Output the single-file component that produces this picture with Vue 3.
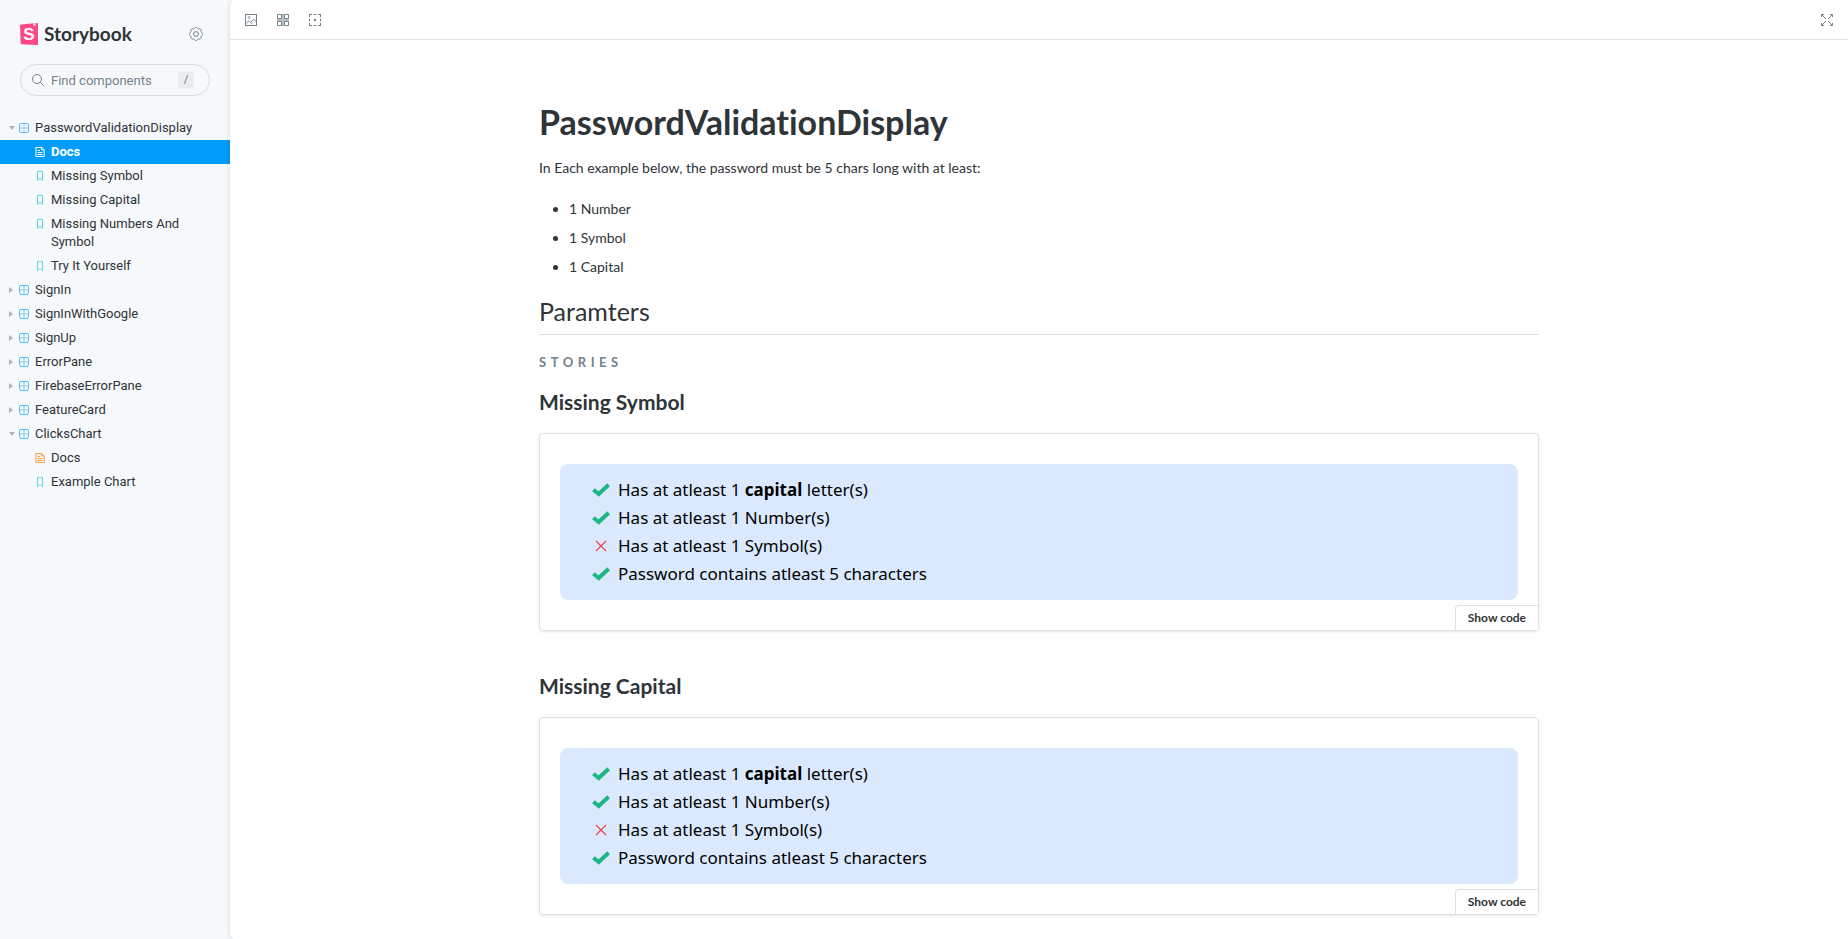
<script setup>
const tree = [
  {
    name: 'PasswordValidationDisplay',
    open: true,
    children: [
      { name: 'Docs', kind: 'docs', selected: true },
      { name: 'Missing Symbol', kind: 'story' },
      { name: 'Missing Capital', kind: 'story' },
      { name: 'Missing Numbers And Symbol', kind: 'story' },
      { name: 'Try It Yourself', kind: 'story' },
    ],
  },
  { name: 'SignIn' },
  { name: 'SignInWithGoogle' },
  { name: 'SignUp' },
  { name: 'ErrorPane' },
  { name: 'FirebaseErrorPane' },
  { name: 'FeatureCard' },
  {
    name: 'ClicksChart',
    open: true,
    children: [
      { name: 'Docs', kind: 'docs' },
      { name: 'Example Chart', kind: 'story' },
    ],
  },
]

const stories = ['Missing Symbol', 'Missing Capital']

const rules = [
  { ok: true, before: 'Has at atleast 1 ', strong: 'capital', after: ' letter(s)' },
  { ok: true, before: 'Has at atleast 1 Number(s)' },
  { ok: false, before: 'Has at atleast 1 Symbol(s)' },
  { ok: true, before: 'Password contains atleast 5 characters' },
]

// Outline of an eight-toothed cog around the centre of a 14-unit box.
const cogPoints = Array.from({ length: 96 }, (_, i) => {
  const angle = (i / 96) * Math.PI * 2
  const radius = 6.05 + 0.55 * Math.tanh(2 * Math.cos(8 * angle))
  return `${(7 + radius * Math.cos(angle)).toFixed(2)},${(7 + radius * Math.sin(angle)).toFixed(2)}`
}).join(' ')
</script>

<template>
  <div class="app">
    <aside class="sidebar">
      <header class="brand-row">
        <a class="brand" href="#">
          <svg class="logo" viewBox="0 0 18 22" aria-hidden="true">
            <path fill="#ff4785" d="M1 1.6 16.8.1a1 1 0 0 1 1.2 1V21a1 1 0 0 1-1.1 1L1.6 21.3a1 1 0 0 1-1-1L0 2.6a1 1 0 0 1 1-1z" />
            <path fill="#fff" d="M13.3.4l2.2-.2.1 2.8-.9-.6-1 .7z" />
            <text x="9" y="17" text-anchor="middle" class="mark">S</text>
          </svg>
          <span>Storybook</span>
        </a>
        <button class="icon-button" type="button" aria-label="Shortcuts">
          <svg width="14" height="14" viewBox="0 0 14 14" fill="none" stroke="currentColor">
            <circle cx="7" cy="7" r="2.4" />
            <polygon :points="cogPoints" />
          </svg>
        </button>
      </header>

      <div class="search">
        <svg width="12" height="12" viewBox="0 0 12 12" fill="none" stroke="currentColor">
          <circle cx="5" cy="5" r="4.5" />
          <path d="M8.3 8.3 11.6 11.6" />
        </svg>
        <input type="text" placeholder="Find components" aria-label="Find components" />
        <kbd>/</kbd>
      </div>

      <nav class="tree">
        <template v-for="node in tree" :key="node.name">
          <button type="button" class="node" :aria-expanded="!!node.open">
            <span class="caret" :class="{ open: node.open }"></span>
            <svg class="component" width="10" height="10" viewBox="0 0 10 10" fill="none">
              <rect x=".5" y=".5" width="9" height="9" rx="1.5" />
              <path d="M5 1v8M1 5h8" />
            </svg>
            <span>{{ node.name }}</span>
          </button>
          <a
            v-for="child in node.children"
            :key="child.name"
            href="#"
            class="leaf"
            :class="[child.kind, { selected: child.selected }]"
          >
            <svg v-if="child.kind === 'docs'" width="10" height="10" viewBox="0 0 10 10" fill="none" stroke="currentColor">
              <path d="M.9.5h6L9.200 2.800v6.700H.9zM6.700.5V3H9" />
              <path d="M2.500 3.500h2.500M2.500 5.500h5M2.500 7.500h5" />
            </svg>
            <svg v-else width="10" height="10" viewBox="0 0 10 10" fill="none" stroke="currentColor">
              <path d="M2.500.5h5v9L5 7.300 2.500 9.500z" />
            </svg>
            <span>{{ child.name }}</span>
          </a>
        </template>
      </nav>
    </aside>

    <main class="main">
      <div class="toolbar">
        <button class="icon-button" type="button" aria-label="Change the background">
          <svg width="12" height="12" viewBox="0 0 12 12" fill="none" stroke="currentColor">
            <rect x=".5" y=".5" width="11" height="11" />
            <circle cx="4" cy="3.500" r="1" stroke-width=".7" />
            <path stroke-width=".9" d="M1 9.300 4 6.800l3.500 3.500M5.800 8.300l3-3.300 2.500 2.800" />
          </svg>
        </button>
        <button class="icon-button" type="button" aria-label="Apply a grid">
          <svg width="12" height="12" viewBox="0 0 12 12" fill="none" stroke="currentColor">
            <path stroke-width="3" opacity=".5" d="M6 0v12M0 6h12" />
            <path d="M.5.5h4v4h-4zM7.500.5h4v4h-4zM.5 7.500h4v4h-4zM7.500 7.500h4v4h-4z" />
          </svg>
        </button>
        <button class="icon-button" type="button" aria-label="Enable outlines">
          <svg width="12" height="12" viewBox="0 0 12 12" fill="none" stroke="currentColor">
            <path d="M0 .5h3M4.500.5h3M9 .5h3M0 11.500h3M4.500 11.500h3M9 11.500h3M.5 0v3M.5 4.500v3M.5 9v3M11.500 0v3M11.500 4.500v3M11.500 9v3" />
            <path stroke-width="2" d="M5 6h2" />
          </svg>
        </button>
        <button class="icon-button last" type="button" aria-label="Go full screen">
          <svg width="12" height="12" viewBox="0 0 12 12" fill="none" stroke="currentColor">
            <path d="M.5 3V.5H3M9 .5h2.500V3M11.500 9v2.500H9M3 11.500H.5V9M.5.5 5 5M11.500.5 7 5M11.500 11.500 7 7M.5 11.500 5 7" />
          </svg>
        </button>
      </div>

      <article class="docs-page">
        <h1>PasswordValidationDisplay</h1>
        <p>In Each example below, the password must be 5 chars long with at least:</p>
        <ul class="needs">
          <li>1 Number</li>
          <li>1 Symbol</li>
          <li>1 Capital</li>
        </ul>
        <h2>Paramters</h2>
        <div class="eyebrow">Stories</div>

        <section v-for="story in stories" :key="story" class="story-block">
          <h3>{{ story }}</h3>
          <div class="preview">
            <ul class="rules">
              <li v-for="rule in rules" :key="rule.before">
                <svg v-if="rule.ok" width="18" height="14" viewBox="0 0 18 14" fill="none" stroke="#1fb586" stroke-width="4">
                  <path d="M1.400 6.700 6.700 11 16.600 1.700" />
                </svg>
                <svg v-else width="18" height="14" viewBox="0 0 18 14" fill="none" stroke="#ef4444" stroke-width="1.200">
                  <path d="M4 2l10 10M14 2 4 12" />
                </svg>
                <span>{{ rule.before }}<strong v-if="rule.strong">{{ rule.strong }}</strong>{{ rule.after }}</span>
              </li>
            </ul>
            <button type="button" class="show-code">Show code</button>
          </div>
        </section>
      </article>
    </main>
  </div>
</template>

<style>
body {
  margin: 0;
  background: #f6f9fc;
}
</style>

<style scoped>
.app {
  display: flex;
  height: 100vh;
  overflow: hidden;
  color: #2e3438;
  font-family: Lato, "Open Sans", sans-serif;
  font-size: 14px;
  font-variant-ligatures: none;
}

button,
input {
  font: inherit;
  color: inherit;
  font-variant-ligatures: none;
}

button {
  border: 0;
  padding: 0;
  background: none;
}

a {
  color: inherit;
  text-decoration: none;
}

svg {
  flex: none;
  display: block;
}

.sidebar {
  flex: none;
  width: 230px;
  box-sizing: border-box;
  background: #f6f9fc;
}

.brand-row {
  display: flex;
  align-items: center;
  justify-content: space-between;
  height: 28px;
  padding: 20px 20px 0;
}

.brand {
  display: flex;
  align-items: center;
  gap: 6px;
  font-size: 19px;
  font-weight: 700;
  line-height: 22px;
}

.logo {
  width: 18px;
  height: 22px;
}

.mark {
  fill: #fff;
  font: bold 17px "Liberation Sans", sans-serif;
}

.icon-button {
  display: grid;
  place-items: center;
  width: 28px;
  height: 28px;
  color: #73828c;
}

.search {
  display: flex;
  align-items: center;
  gap: 7px;
  height: 32px;
  margin: 16px 20px 20px;
  padding: 0 15px 0 11px;
  box-sizing: border-box;
  border: 1px solid #d5dfe8;
  border-radius: 16px;
  color: #73828c;
}

.search input {
  flex: 1;
  min-width: 0;
  padding: 0;
  border: 0;
  outline: 0;
  background: none;
  font-family: Roboto, sans-serif;
  font-size: 13px;
}

.search input::placeholder {
  color: #73828c;
  opacity: 1;
}

.search kbd {
  width: 16px;
  height: 16px;
  border-radius: 3px;
  background: #e9edf0;
  font: 12px/16px "Open Sans", sans-serif;
  text-align: center;
}

.tree {
  display: flex;
  flex-direction: column;
  font-family: Roboto, sans-serif;
  font-size: 13px;
}

.node,
.leaf {
  display: flex;
  align-items: flex-start;
  gap: 6px;
  padding: 3px 20px 3px 9px;
  line-height: 18px;
  text-align: left;
}

.leaf {
  padding-left: 35px;
}

.node svg,
.leaf svg {
  margin-top: 4px;
}

.caret {
  width: 4px;
  height: 18px;
  display: grid;
  place-items: center start;
}

.caret::before {
  content: "";
  border: 3px solid transparent;
  border-left: 4px solid #a9b3ba;
  border-right: 0;
}

.caret.open::before {
  border: 3px solid transparent;
  border-top: 4px solid #a9b3ba;
  border-bottom: 0;
}

.component {
  stroke: #5cb9fb;
}

.component path {
  opacity: 0.7;
}

.story svg {
  color: #5fdcda;
}

.docs svg {
  color: #ff9a3c;
}

.leaf.selected {
  background: #029cfd;
  color: #fff;
  font-weight: 700;
}

.leaf.selected svg {
  color: #fff;
}

.main {
  flex: 1;
  min-width: 0;
  overflow: hidden;
  border-radius: 5px 0 0 5px;
  background: #fff;
  box-shadow: 0 0 4px rgba(0, 0, 0, 0.16);
}

.toolbar {
  display: flex;
  align-items: center;
  gap: 4px;
  height: 39px;
  padding: 0 7px;
  border-bottom: 1px solid #dfe4e9;
}

.toolbar .last {
  margin-left: auto;
}

.docs-page {
  max-width: 1000px;
  margin: 0 auto;
  padding: 64px 20px;
}

h1,
h2,
h3,
p {
  margin: 0;
}

h1 {
  font-size: 34px;
  line-height: 36px;
}

p {
  margin: 16px 0;
  line-height: 24px;
}

.needs {
  margin: 0;
  padding-left: 30px;
}

.needs li {
  margin-bottom: 4px;
  line-height: 25px;
}

h2 {
  margin-top: 18px;
  padding-bottom: 9px;
  border-bottom: 1px solid #d9e1e8;
  font-size: 25px;
  font-weight: 400;
  line-height: 28px;
}

.eyebrow {
  margin-top: 15px;
  color: #73828c;
  font-size: 13px;
  font-weight: 700;
  line-height: 24px;
  letter-spacing: 0.35em;
  text-transform: uppercase;
}

.story-block h3 {
  margin: 14px 0 17px;
  font-size: 21px;
  line-height: 28px;
}

.preview {
  position: relative;
  padding: 30px 20px;
  border: 1px solid #dae2e9;
  border-radius: 4px;
  box-shadow: 0 1px 3px rgba(0, 0, 0, 0.1);
}

.story-block + .story-block {
  padding-top: 27px;
}

.rules {
  margin: 0;
  padding: 12px 32px;
  border-radius: 8px;
  background: #dbe9fe;
  color: #000;
  font: 17px/28px "Noto Sans", sans-serif;
  list-style: none;
}

.rules li {
  display: flex;
  align-items: center;
  gap: 8px;
}

.rules span {
  white-space: pre-wrap;
}

.show-code {
  position: absolute;
  right: 0;
  bottom: 0;
  padding: 4px 12px;
  border: 1px solid #dae2e9;
  border-width: 1px 0 0 1px;
  border-radius: 4px 0 0 0;
  background: #fff;
  font-size: 12px;
  font-weight: 700;
  line-height: 16px;
}
</style>
